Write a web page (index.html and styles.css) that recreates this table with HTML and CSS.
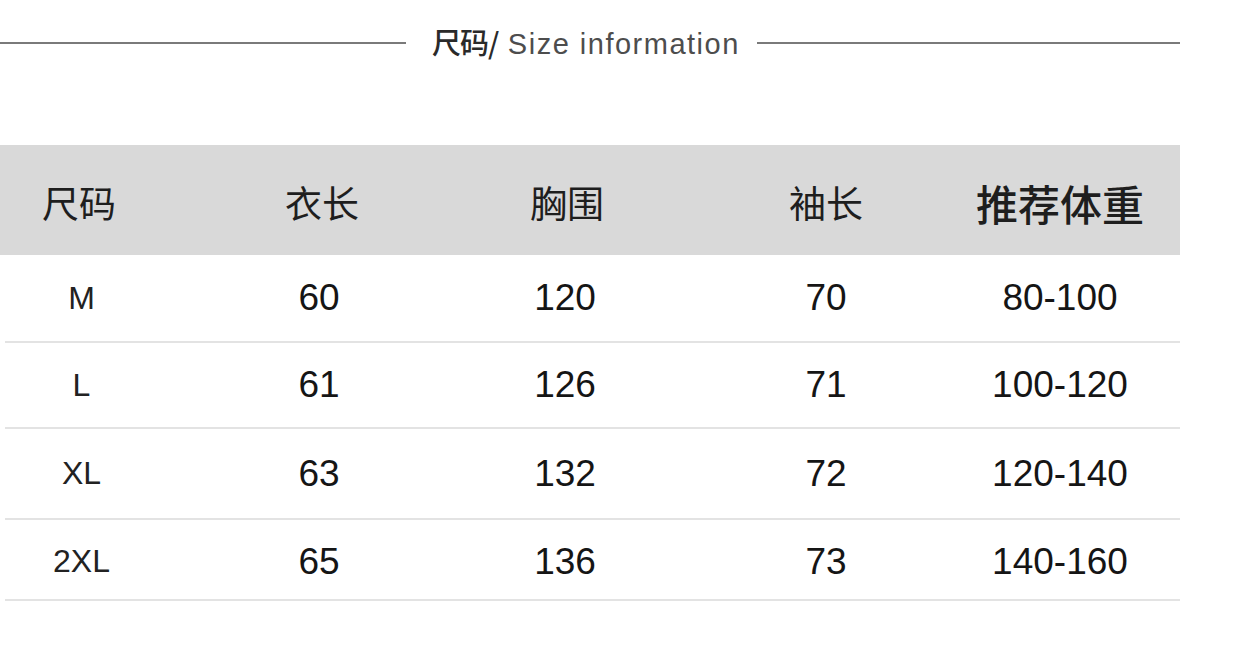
FILE: index.html
```html
<!DOCTYPE html>
<html lang="zh-CN">
<head>
<meta charset="utf-8">
<title>尺码 Size information</title>
<link rel="stylesheet" href="styles.css">
</head>
<body>
<div class="page">
  <div class="title-row">
    <span class="rule rule-left"></span>
    <h1 class="title"><span class="title-cn">尺码/</span> Size information</h1>
    <span class="rule rule-right"></span>
  </div>
  <div class="table">
    <div class="row head">
      <div class="cell">尺码</div>
      <div class="cell">衣长</div>
      <div class="cell">胸围</div>
      <div class="cell">袖长</div>
      <div class="cell wide">推荐体重</div>
    </div>
    <div class="row data r1">
      <div class="cell size">M</div>
      <div class="cell">60</div>
      <div class="cell">120</div>
      <div class="cell">70</div>
      <div class="cell">80-100</div>
    </div>
    <div class="row data r2">
      <div class="cell size">L</div>
      <div class="cell">61</div>
      <div class="cell">126</div>
      <div class="cell">71</div>
      <div class="cell">100-120</div>
    </div>
    <div class="row data r3">
      <div class="cell size">XL</div>
      <div class="cell">63</div>
      <div class="cell">132</div>
      <div class="cell">72</div>
      <div class="cell">120-140</div>
    </div>
    <div class="row data r4">
      <div class="cell size">2XL</div>
      <div class="cell">65</div>
      <div class="cell">136</div>
      <div class="cell">73</div>
      <div class="cell">140-160</div>
    </div>
  </div>
</div>
</body>
</html>
```

FILE: styles.css
```css
html, body {
  margin: 0;
  padding: 0;
  background: #ffffff;
}

.page {
  width: 1180px;
  font-family: "Liberation Sans", "Noto Sans CJK SC", sans-serif;
}

.title-row {
  display: flex;
  align-items: center;
  height: 86px;
}

.rule {
  display: block;
  height: 2px;
  background: #7a7a7a;
}

.rule-left {
  flex: 0 0 406px;
}

.rule-right {
  flex: 1 1 auto;
}

.title {
  margin: 0 17px 0 26px;
  font-family: "Liberation Sans", "Noto Sans CJK SC", sans-serif;
  font-size: 29px;
  font-weight: normal;
  color: #4d4d4d;
  letter-spacing: 1.5px;
  white-space: nowrap;
  line-height: 1;
}

.title-cn {
  font-family: "Noto Sans CJK SC", sans-serif;
  font-weight: 500;
  color: #2a2a2a;
  letter-spacing: -1px;
}

.table {
  margin-top: 59px;
}

.row {
  display: grid;
  grid-template-columns: 158px 328px 162px 356px 112px;
}

.cell {
  display: flex;
  justify-content: center;
  align-items: center;
  white-space: nowrap;
}

.head {
  height: 110px;
  background: #d9d9d9;
}

.head .cell {
  font-family: "Noto Sans CJK SC", sans-serif;
  font-size: 37px;
  color: #1e1e1e;
  padding-top: 4px;
}

.head .wide {
  font-size: 42px;
  font-weight: 500;
}

.data {
  margin-left: 5px;
  grid-template-columns: 153px 322px 170px 352px 116px;
  border-bottom: 2px solid #e3e3e3;
  font-size: 37px;
  color: #151515;
}

.data .cell.size {
  font-size: 32px;
  color: #222222;
}

.r1 { height: 86px; }
.r2 { height: 84px; }
.r3 { height: 89px; }
.r4 { height: 79px; }
.r4 .cell { padding-top: 4px; }
```
